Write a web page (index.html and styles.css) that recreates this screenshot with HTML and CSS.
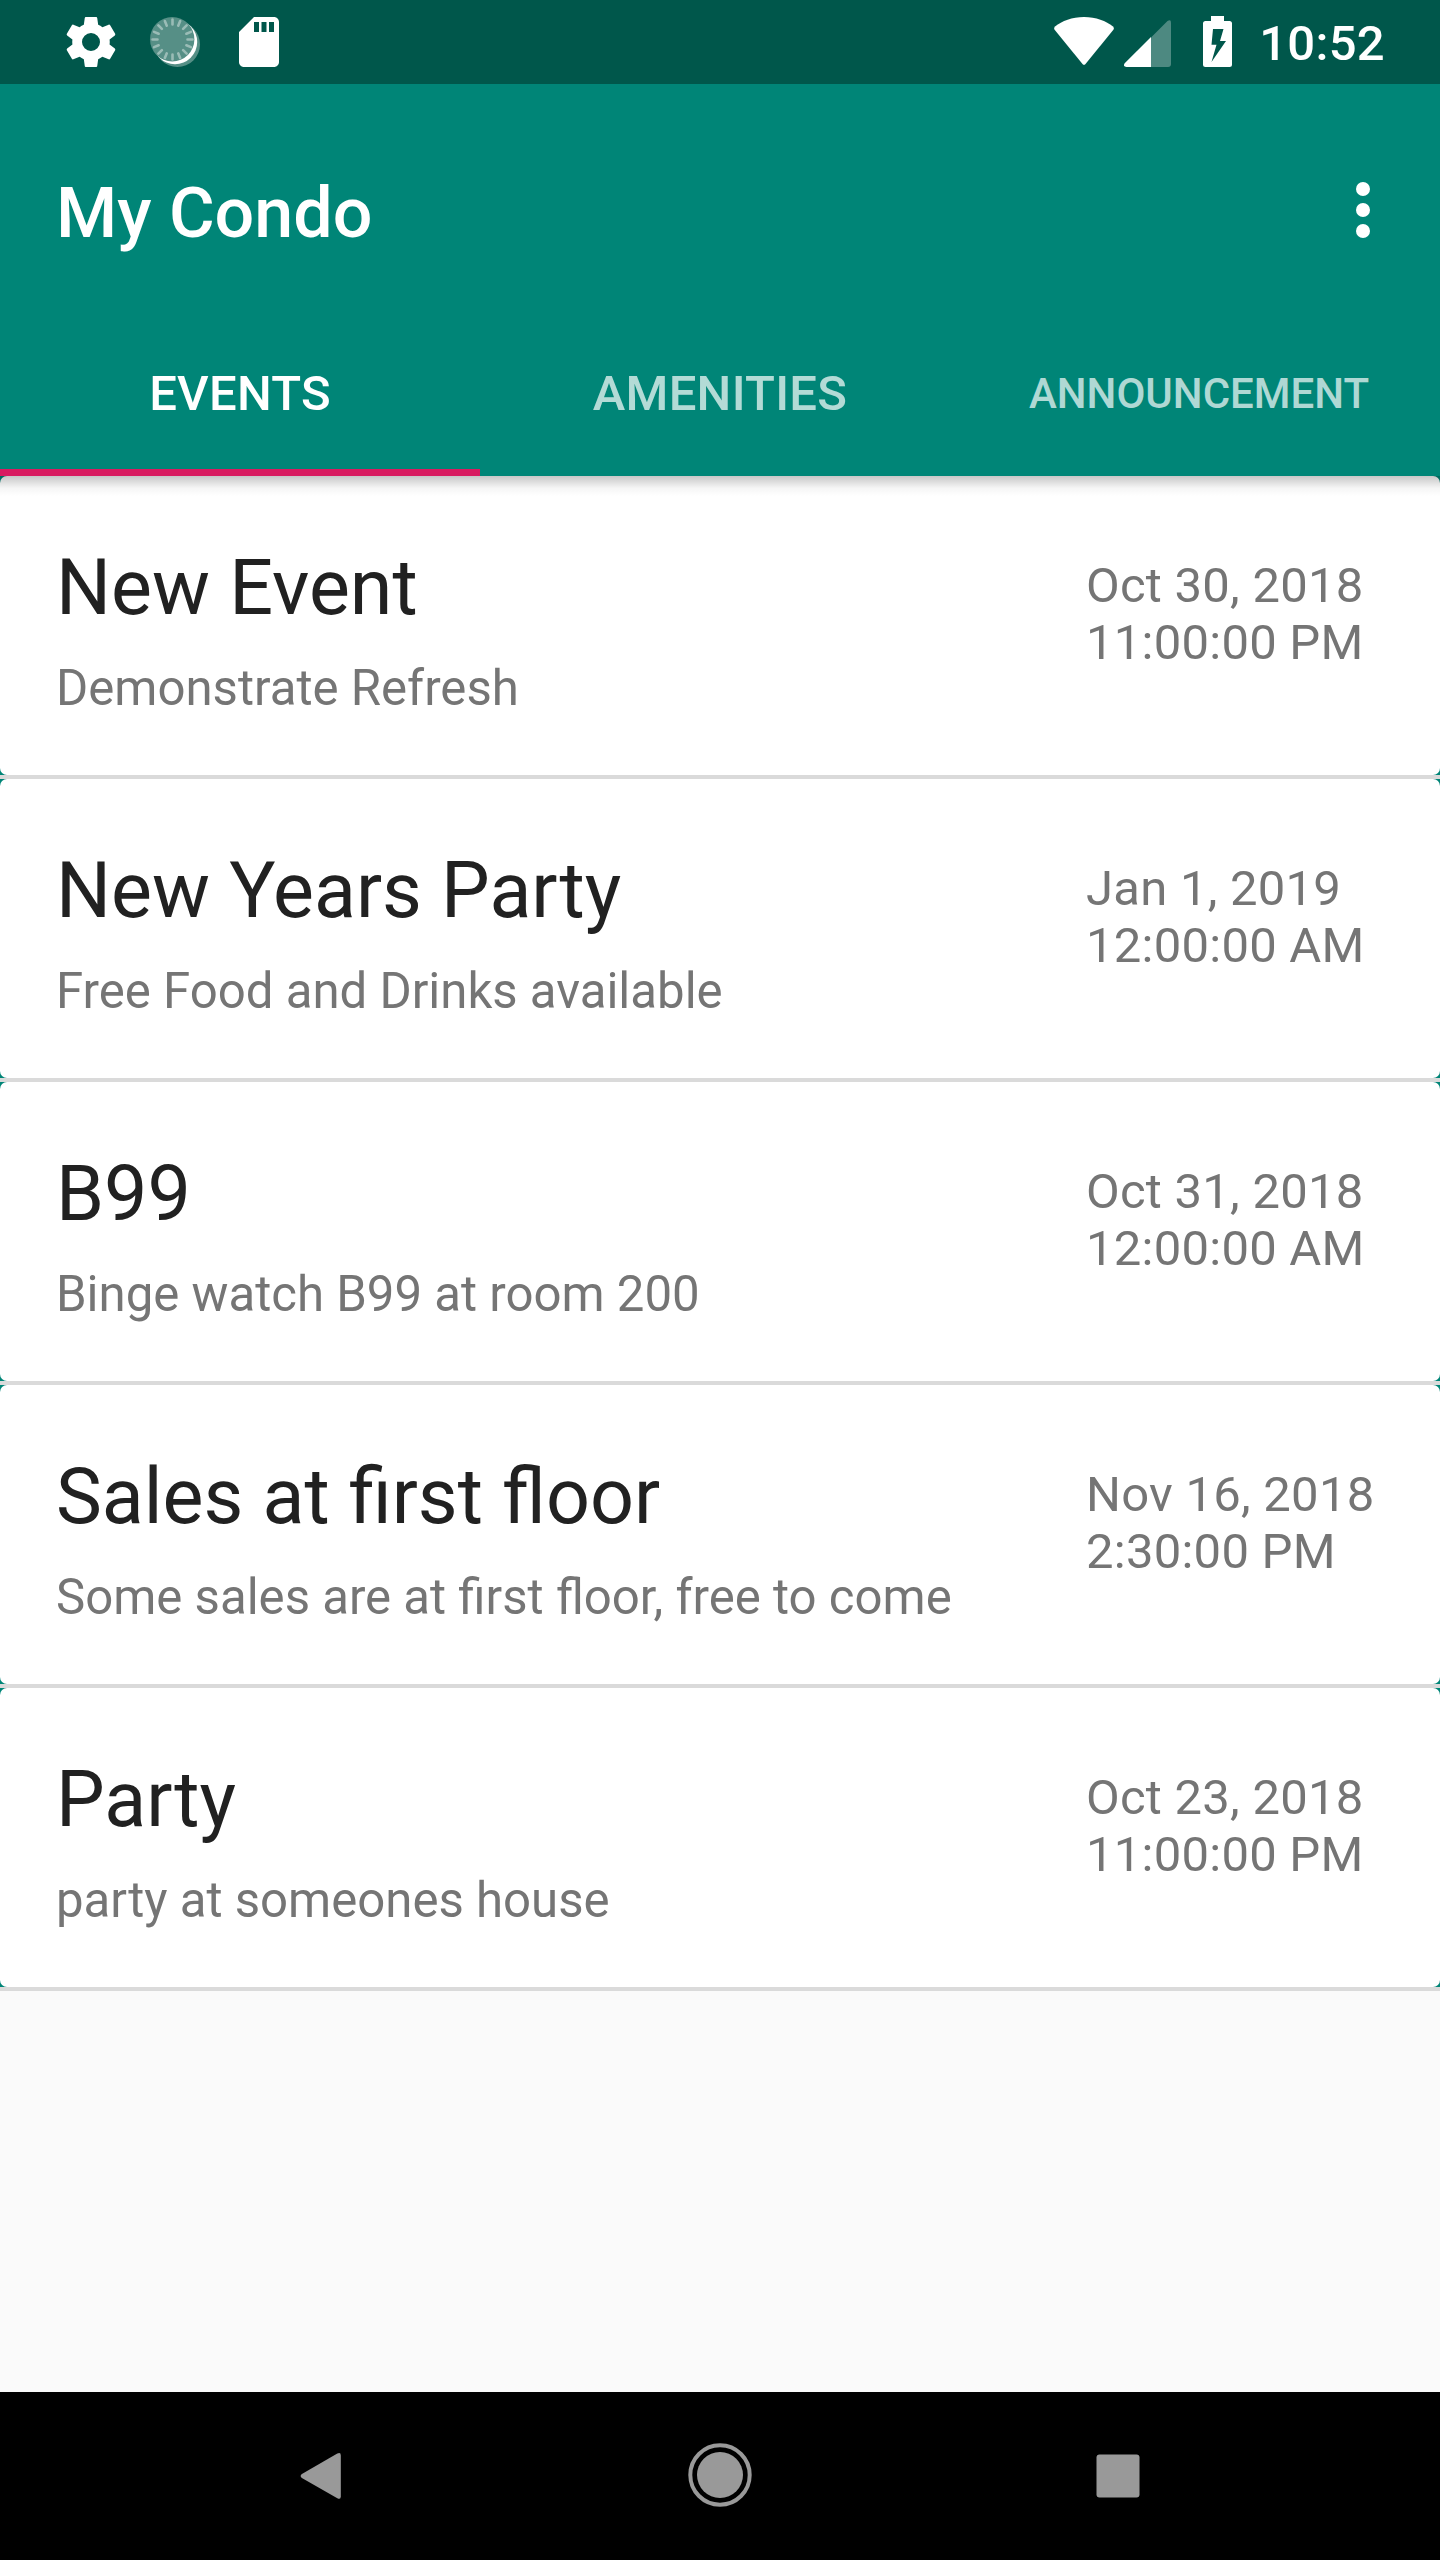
FILE: index.html
```html
<!DOCTYPE html>
<html lang="en">
<head>
<meta charset="utf-8">
<title>My Condo</title>
<link rel="stylesheet" href="styles.css">
</head>
<body>
<div class="screen">
  <div class="status-bar">
    <div class="notifications">
      <svg class="icon" viewBox="0 0 24 24"><path fill="#fff" d="M19.43 12.98c.04-.32.07-.64.07-.98s-.03-.66-.07-.98l2.11-1.65c.19-.15.24-.42.12-.64l-2-3.46c-.12-.22-.39-.3-.61-.22l-2.49 1c-.52-.4-1.08-.73-1.69-.98l-.38-2.65C14.46 2.18 14.25 2 14 2h-4c-.25 0-.46.18-.49.42l-.38 2.65c-.61.25-1.17.59-1.69.98l-2.49-1c-.23-.09-.49 0-.61.22l-2 3.46c-.13.22-.07.49.12.64l2.11 1.65c-.04.32-.07.65-.07.98s.03.66.07.98l-2.11 1.65c-.19.15-.24.42-.12.64l2 3.46c.12.22.39.3.61.22l2.49-1c.52.4 1.08.73 1.69.98l.38 2.65c.03.24.24.42.49.42h4c.25 0 .46-.18.49-.42l.38-2.65c.61-.25 1.17-.59 1.69-.98l2.49 1c.23.09.49 0 .61-.22l2-3.46c.12-.22.07-.49-.12-.64l-2.11-1.65zM12 15.6a3.6 3.6 0 1 1 0-7.2 3.6 3.6 0 0 1 0 7.2z"/></svg>
      <svg class="icon" viewBox="0 0 60 60">
        <circle cx="32.4" cy="32.4" r="22.6" fill="#568f86"/>
        <circle cx="30" cy="30" r="22.200" fill="#fff"/>
        <circle cx="27.2" cy="27.2" r="22.200" fill="#568f86"/>
        <g stroke="#9abcb6" stroke-width="2.6" stroke-linecap="round">
          <path id="ray" d="M27.5 7.5v5M27.5 42.5v5M7.5 27.5h5M42.5 27.5h5"/>
          <use href="#ray" transform="rotate(22.5 27.5 27.5)"/>
          <use href="#ray" transform="rotate(45 27.5 27.5)"/>
          <use href="#ray" transform="rotate(67.5 27.5 27.5)"/>
        </g>
      </svg>
      <svg class="icon" viewBox="0 0 24 24"><path fill="#fff" fill-rule="evenodd" d="M18 2h-8L4 8v12c0 1.1.9 2 2 2h12c1.1 0 2-.9 2-2V4c0-1.1-.9-2-2-2zM12 8h-2V4h2v4zm3 0h-2V4h2v4zm3 0h-2V4h2v4z"/></svg>
    </div>
    <div class="system">
      <svg class="wifi" viewBox="0 0 60 48"><path fill="#fff" d="M1 9.500C8 4 18 0 30 0s22 4 29 9.500q1.500 1.500.4 3.200L31.500 47q-1.500 1.700-3 0L.6 12.700Q-.5 11 1 9.500z"/></svg>
      <svg class="signal" viewBox="0 0 47 47"><path fill="#fff" fill-opacity=".3" d="M27 17.500 43.500 1Q47-1 47 2.500V44q0 3-3 3H27z"/><path fill="#fff" d="M27 17v30H2.500Q-1.500 46.500.7 43.300z"/></svg>
      <svg class="battery" viewBox="0 0 29 51"><path fill="#fff" fill-rule="evenodd" d="M8 0h13v5h5.500Q29 5 29 7.500v41Q29 51 26.500 51h-24Q0 51 0 48.500v-41Q0 5 2.500 5H8zM10 13 8.500 28.700h5L8.500 46 23 25h-6l3.500-12z"/></svg>
      <span class="clock">10:52</span>
    </div>
  </div>
  <header class="app-bar">
    <div class="toolbar">
      <h1 class="title">My Condo</h1>
      <svg class="overflow" viewBox="0 0 14 56"><g fill="#fff"><circle cx="7" cy="7" r="7"/><circle cx="7" cy="28" r="7"/><circle cx="7" cy="49" r="7"/></g></svg>
    </div>
    <nav class="tabs">
      <div class="tab active">EVENTS</div>
      <div class="tab">AMENITIES</div>
      <div class="tab compact">ANNOUNCEMENT</div>
    </nav>
  </header>
  <main class="events">
    <div class="row"><article class="card"><div class="info"><h2 class="name">New Event</h2><p class="note">Demonstrate Refresh</p></div><div class="when">Oct 30, 2018<br>11:00:00 PM</div></article></div>
    <div class="row"><article class="card"><div class="info"><h2 class="name">New Years Party</h2><p class="note">Free Food and Drinks available</p></div><div class="when">Jan 1, 2019<br>12:00:00 AM</div></article></div>
    <div class="row"><article class="card"><div class="info"><h2 class="name">B99</h2><p class="note">Binge watch B99 at room 200</p></div><div class="when">Oct 31, 2018<br>12:00:00 AM</div></article></div>
    <div class="row"><article class="card"><div class="info"><h2 class="name">Sales at first floor</h2><p class="note">Some sales are at first floor, free to come</p></div><div class="when">Nov 16, 2018<br>2:30:00 PM</div></article></div>
    <div class="row"><article class="card"><div class="info"><h2 class="name">Party</h2><p class="note">party at someones house</p></div><div class="when">Oct 23, 2018<br>11:00:00 PM</div></article></div>
  </main>
  <footer class="nav-bar">
    <svg class="nav-icon" viewBox="0 0 64 64"><path fill="#999" d="M12.900 31 48.300 10.600Q51.800 8.800 51.800 12.500V53.500Q51.800 57 48.300 55.200L12.900 35Q10.300 33 12.900 31z"/></svg>
    <svg class="nav-icon" viewBox="0 0 64 64"><circle cx="32" cy="32" r="23" fill="#999"/><circle cx="32" cy="32" r="29.700" fill="none" stroke="#999" stroke-width="4"/></svg>
    <svg class="nav-icon" viewBox="0 0 64 64"><rect x="10.500" y="11.500" width="43" height="43" rx="3" fill="#999"/></svg>
  </footer>
</div>
</body>
</html>
```
FILE: styles.css
```css
* {
  box-sizing: border-box;
}

body {
  margin: 0;
  font-family: Roboto, "Liberation Sans", sans-serif;
}

.screen {
  display: flex;
  flex-direction: column;
  width: 1440px;
  height: 2560px;
  background: #fafafa;
  overflow: hidden;
}

.status-bar {
  display: flex;
  justify-content: space-between;
  flex: none;
  height: 84px;
  padding: 0 55px 0 61px;
  background: #00574b;
}

.notifications {
  display: flex;
  gap: 24px;
  padding-top: 12px;
}

.icon {
  width: 60px;
  height: 60px;
}

.system {
  display: flex;
  align-items: flex-start;
}

.wifi {
  width: 60px;
  height: 48px;
  margin: 17px 10px 0 0;
}

.signal {
  width: 47px;
  height: 47px;
  margin: 20px 32px 0 0;
}

.battery {
  width: 29px;
  height: 51px;
  margin: 16px 27px 0 0;
}

.clock {
  padding-top: 15px;
  font-size: 49px;
  font-weight: 500;
  line-height: 58px;
  letter-spacing: 0.3px;
  color: #fff;
}

.app-bar {
  flex: none;
  height: 392px;
  padding-top: 28px;
  background: #008577;
  color: #fff;
}

.toolbar {
  display: flex;
  align-items: center;
  justify-content: space-between;
  height: 196px;
  padding: 0 70px 0 56px;
}

.title {
  margin: 0;
  padding-top: 6px;
  font-size: 70px;
  font-weight: 500;
  line-height: 82px;
}

.overflow {
  width: 14px;
  height: 56px;
}

.tabs {
  display: grid;
  grid-template-columns: repeat(3, 1fr);
  height: 168px;
}

.tab {
  display: flex;
  align-items: center;
  justify-content: center;
  padding-top: 11px;
  border-bottom: 7px solid transparent;
  font-size: 49px;
  font-weight: 500;
  line-height: 58px;
  letter-spacing: 0.25px;
  color: rgba(255, 255, 255, 0.7);
}

.tab.active {
  border-bottom-color: #d81b60;
  color: #fff;
}

.tab.compact {
  padding-right: 2px;
  font-size: 42px;
  letter-spacing: 0;
}

.events {
  position: relative;
  flex: 1;
}

/* Elevation shadow cast by the app bar over the list */
.events::before {
  content: "";
  position: absolute;
  inset: 0 0 auto;
  height: 20px;
  background: linear-gradient(rgba(0, 0, 0, 0.22), rgba(0, 0, 0, 0.13) 30%, rgba(0, 0, 0, 0.04) 60%, transparent);
}

.row {
  border-bottom: 4px solid #dadada;
  background: #008577;
}

.card {
  display: flex;
  height: 299px;
  padding-left: 56px;
  border-radius: 7px;
  background: #fff;
}

.info {
  width: 1030px;
  padding-top: 66px;
}

.name,
.note {
  margin: 0;
  font-weight: 400;
}

.name {
  font-size: 77.2px;
  line-height: 92px;
  color: #212121;
}

.note {
  margin-top: 26px;
  font-size: 49.15px;
  line-height: 57px;
  color: #757575;
}

.when {
  padding-top: 81px;
  font-size: 49px;
  line-height: 57px;
  letter-spacing: 0.25px;
  color: #757575;
}

.nav-bar {
  display: flex;
  align-items: flex-start;
  justify-content: space-between;
  flex: none;
  height: 168px;
  padding: 51px 290px 0 289px;
  background: #000;
}

.nav-icon {
  width: 64px;
  height: 64px;
}
```
